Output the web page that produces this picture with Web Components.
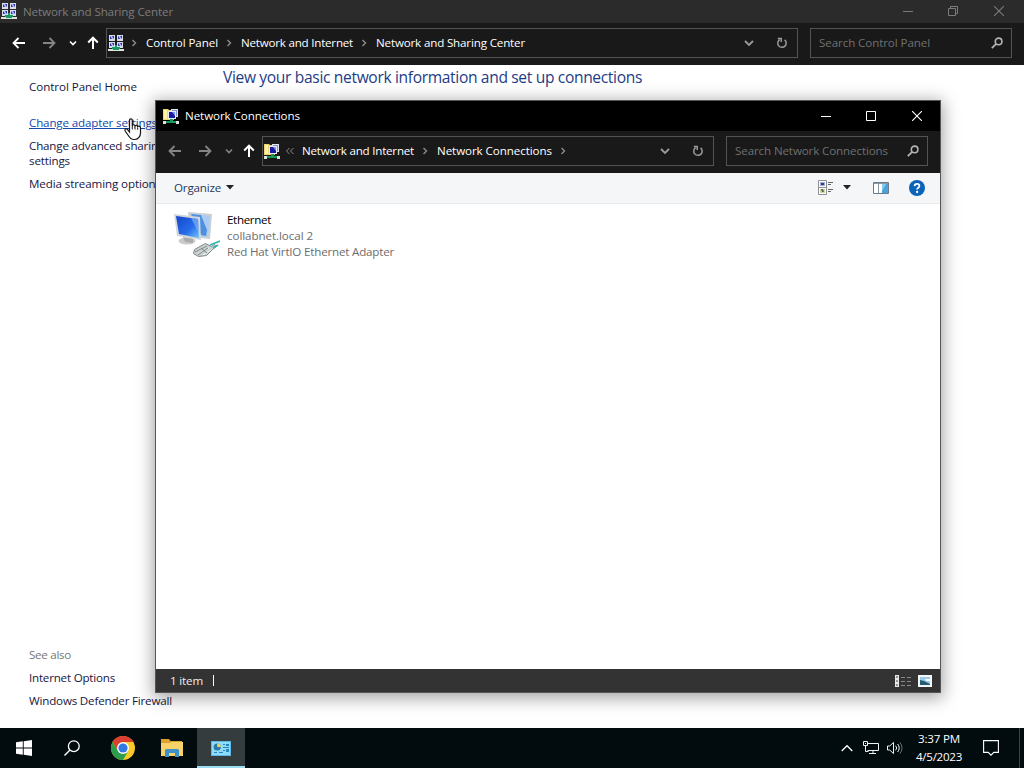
<!DOCTYPE html>
<html lang="en">
<head>
<meta charset="utf-8">
<title>Network Connections</title>
<style>
    html, body { margin: 0; height: 100%; overflow: hidden; }
    body { font-family: "Open Sans", "Noto Sans", sans-serif; font-size: 11.6px; color: #16163f; }
</style>
</head>
<body>
<desktop-screen></desktop-screen>

<script>
const monitor = (x, y) => `<path fill="#d9dde8" d="M${x} ${y}h6v6h-6z"/><path fill="#2a2fa8" d="M${x + 1} ${y + 1}h4v3h-4z"/><path fill="#b3bdf5" d="M${x + 1} ${y + 1}h2l2 3h-2z"/>`;

const ICONS = {
    sharing: [16, 16, `${monitor(1, 0)}${monitor(9, 0)}${monitor(1, 7)}${monitor(9, 7)}
        <path fill="#169a62" d="M7 10h2v2h3v2H4v-2h3z"/><path fill="#dbe3df" d="M0 14h16v2H0z"/><path fill="#169a62" d="M5 13h6v2H5z"/>`],
    connections: [16, 16, `<path fill="#e9d673" d="M0 1h5l1 1h5v10H0z"/><path fill="#fff2a5" d="M1 2h3v9H1z"/>
        <path fill="#dfe4ef" d="M8 1h7v8H8z"/><path fill="#8290ce" d="M9 2h5v6H9z"/>
        <path fill="#e7ebf4" d="M5 3h8v8H5z"/><path fill="#1719a2" d="M6 4h6v6H6z"/><path fill="#7d91ef" d="M9 4h3v4z"/>
        <path fill="#159b57" d="M7 11h3v2h3v2H3v-2h4z"/><path fill="#d8e3dc" d="M0 13h3v3H0zM13 13h3v3h-3z"/>`],
    back: [14, 14, `<path d="M13 7H1.5M6.5 2 1.5 7l5 5" fill="none" stroke="currentColor" stroke-width="1.8"/>`],
    forward: [14, 14, `<path d="M1 7h11.5M7.5 2l5 5-5 5" fill="none" stroke="currentColor" stroke-width="1.8"/>`],
    up: [14, 14, `<path d="M7 13V2M2.2 6.5 7 1.7l4.8 4.8" fill="none" stroke="currentColor" stroke-width="2"/>`],
    down: [8, 8, `<path d="M1 2.5l3 3 3-3" fill="none" stroke="currentColor" stroke-width="1.6"/>`],
    expand: [10, 8, `<path d="M1 2l4 4 4-4" fill="none" stroke="currentColor" stroke-width="1.8"/>`],
    crumb: [6, 8, `<path d="M1.5 1l3 3-3 3" fill="none" stroke="currentColor" stroke-width="1.4"/>`],
    crumbs: [8, 8, `<path d="M3.5 1l-3 3 3 3M7.5 1l-3 3 3 3" fill="none" stroke="currentColor"/>`],
    refresh: [12, 12, `<path d="M8.6 2.9A4.2 4.2 0 1 1 3.6 2.7M1.8 1.5h3.4v3.4" fill="none" stroke="currentColor" stroke-width="1.5"/>`],
    find: [12, 12, `<circle cx="7.6" cy="4.4" r="3.3" fill="none" stroke="currentColor" stroke-width="1.6"/><path d="M5.2 6.8.8 11.2" stroke="currentColor" stroke-width="1.8"/>`],
    minimize: [10, 10, `<path fill="currentColor" d="M0 5h10v1H0z"/>`],
    maximize: [10, 10, `<path d="M.5.5h9v9h-9z" fill="none" stroke="currentColor"/>`],
    restore: [10, 10, `<path d="M.5 2.5h7v7h-7zM2.5 2.5v-2h7v7h-2" fill="none" stroke="currentColor"/>`],
    close: [10, 10, `<path d="M0 0l10 10M10 0 0 10" stroke="currentColor" stroke-width="1.1"/>`],
    caret: [8, 5, `<path fill="#1e2328" d="M0 0h8L4 4.5z"/>`],
    views: [15, 16, `<path d="M.5.5h8v14h-8zM.5 7.5h8" fill="#fff" stroke="#8c8f94"/><path fill="#a3acd6" d="M2 2h5v4H2z"/><path fill="#343f8c" d="M3 3h3v2H3z"/>
        <path fill="#d3d6a4" d="M2 9h5v4H2z"/><path fill="#4d6d4d" d="M3 9h2l1 3H4z"/><path fill="#62666b" d="M10 2h5v1h-5zM10 4h3v1h-3zM10 9h5v1h-5zM10 11h3v1h-3z"/>`],
    pane: [16, 12, `<path fill="#fff" stroke="#6c7b88" d="M.5.5h15v11H.5z"/><path fill="#8997a3" d="M1 1h14v1H1zM5 1h1v10H5z"/><path fill="#4aa4dc" d="M9 2h6v9H9z"/><path fill="#8bcaf0" d="M9 2h4L9 9z"/>`],
    help: [16, 16, `<circle cx="8" cy="8" r="8" fill="#0b63b7"/><path d="M5.6 6.1C5.7 3.1 10.4 3.2 10.4 6c0 1.8-2.3 1.8-2.3 3.6" fill="none" stroke="#fff" stroke-width="1.8"/><circle cx="8.1" cy="12" r="1.15" fill="#fff"/>`],
    adapter: [46, 48, `<defs><linearGradient id="s" x1="0" y1="0" x2="1" y2="1"><stop offset="0" stop-color="#1345cc"/><stop offset=".6" stop-color="#276ce8"/><stop offset="1" stop-color="#72c4ff"/></linearGradient></defs>
        <path fill="#c9d0d4" d="M14 1l24 2-2 25-19-2z"/><path fill="#a9cdf2" d="M17 3l19 2-2 21-16-3z"/><path fill="#4f8fe2" d="M17 3l10 1L33 19l-1 6-5-1z"/>
        <ellipse cx="13" cy="30" rx="8.5" ry="3.5" fill="#c9cbc8"/><path fill="#a8acaa" d="M9 26l10 2v4l-8-1z"/>
        <path fill="#d0d6d9" d="M0 3l26 3 1 23L3 25z"/><path fill="url(#s)" d="M2 5l22 3 1 19L5 23z"/><path fill="#7eb6fa" opacity=".65" d="M17 7.1l7 1 .8 14z"/>
        <path fill="#cdd3d2" stroke="#7e8887" d="M20.5 38.5l11-6 6 3 3-2 2 2-4 3-6 6-8 1-5-3z"/><path fill="none" stroke="#eef1f1" d="M23 40l10-5M25 43l10-6M29 44l8-5"/>
        <path fill="none" stroke="#77827f" d="M21 41l12-6M24 44l10-7M27 37l6 5"/><path fill="none" stroke="#39b5b0" stroke-width="1.8" d="M36 34l10-4M39 37l5-3"/>`],
    details: [16, 12, `<path fill="#e7e7e7" d="M0 0h4v12H0z"/><path fill="#555" d="M1.2 1.2h1.5v1.5H1.2zM1.2 5.2h1.5v1.5H1.2zM1.2 9.2h1.5v1.5H1.2z"/><path fill="#888" d="M6 2h4v1H6zM12 2h4v1h-4zM6 6h4v1H6zM12 6h4v1h-4zM6 10h4v1H6zM12 10h4v1h-4z"/>`],
    large: [14, 12, `<path fill="#f3f7f9" d="M0 0h14v12H0z"/><path fill="#9bcae9" d="M2 2h10v8H2z"/><path fill="#245d72" d="M2 5l4 1 6 3v1H2z"/><path fill="#f6fbff" d="M7 4h5v2H8z"/>`],
    start: [16, 16, `<path fill="#fff" d="M0 2.3l6.8-1v6.3H0zM7.7 1.2 16 0v7.6H7.7zM0 8.4h6.8v6.4L0 13.8zM7.7 8.4H16V16l-8.3-1.2z"/>`],
    search: [16, 16, `<circle cx="9.8" cy="6.2" r="5.4" fill="none" stroke="#fff" stroke-width="1.3"/><path d="M6 10 .5 15.5" stroke="#fff" stroke-width="1.4"/>`],
    chrome: [24, 24, `<circle cx="12" cy="12" r="12" fill="#f8c927"/><path fill="#dc3e31" d="M1.6 6A12 12 0 0 1 22.4 6H12L6.8 15z"/><path fill="#2c9d4c" d="M1.6 6A12 12 0 0 0 12 24l5.2-9H6.8z"/>
        <circle cx="12" cy="12" r="6" fill="#fff"/><circle cx="12" cy="12" r="4.6" fill="#3478e5"/>`],
    explorer: [22, 18, `<path fill="#dda12e" d="M0 0h8l1.5 2H21v3H0z"/><path fill="#f8d36a" d="M0 4h9l1.5-1H22v14H0z"/><path fill="#3f91c9" d="M4 18v-7l1-1h12l1 1v7h-4v-4H8v4z"/>`],
    panel: [20, 15, `<path fill="#5db9e7" d="M0 0h20v15H0z"/><path fill="#8fdbfa" d="M1 1h18v13H1z"/><circle cx="6.2" cy="6" r="3.6" fill="#2879ac"/><path fill="#f1d563" d="M6.2 6V2.4A3.6 3.6 0 0 1 9.8 6z"/>
        <path fill="#2685bd" d="M12 3h2v1h-2zM15 3h3v2h-3zM12 6h6v1h-6zM12 9h2v1h-2zM15 8h3v3h-3zM3 11h3v1H3zM8 11h4v1H8z"/>`],
    chevron: [12, 8, `<path d="M.7 7 6 1.7 11.3 7" fill="none" stroke="#fff" stroke-width="1.3"/>`],
    network: [16, 14, `<path d="M4.5 2.5h11v7h-11M.5.5h4v4h-4zM2.5 4.5v6h3M10 9.5v3M6 12.5h7" fill="none" stroke="#eef2f2"/><path fill="#eef2f2" d="M2 2h1v1H2z"/>`],
    speaker: [16, 14, `<path d="M.5 5h2.2L6.5 1.4v11.2L2.7 9H.5z" fill="none" stroke="#eef2f2"/><path d="M8.6 4.7a3.3 3.3 0 0 1 0 4.6M10.6 3a5.8 5.8 0 0 1 0 8" fill="none" stroke="#eef2f2"/><path d="M12.8 1.4a8.2 8.2 0 0 1 0 11.2" fill="none" stroke="#67706f"/>`],
    action: [16, 16, `<path d="M.6.6h14.8v11.8h-4.6L8 15.2l-2.8-2.8H.6z" fill="none" stroke="#fff" stroke-width="1.1"/>`],
    pointer: [18, 23, `<path d="M5.5 14V2.4c0-2 2.8-2 2.8 0v5.2c.4-1.3 2.5-1.1 2.7.4.7-1.2 2.5-.8 2.7.6 1-1 2.8-.2 2.8 1.2V15c0 3.2-2.2 6.5-5.6 6.5H9.3c-2 0-3.2-1.2-4.3-3L1.2 13c-.9-1.6.9-3 2.2-1.7z" fill="#fff" stroke="#161616" stroke-width="1.2"/><path d="M8.3 7v4.5M11 8.5v3M13.7 9.5v2.2" stroke="#161616"/>`],
};

class BaseElement extends HTMLElement {
    connectedCallback() {
        if (this.shadowRoot) return;
        const template = document.createElement('template');
        template.innerHTML = `<style>${this.css}</style>${this.html}`;
        this.attachShadow({ mode: 'open' }).appendChild(template.content.cloneNode(true));
        this.ready();
    }

    get css() { return ':host { display: block; }'; }
    get html() { return '<slot></slot>'; }
    ready() {}
}

class UiIcon extends BaseElement {
    get css() { return ':host { display: block; flex: none; } svg { display: block; }'; }
    get html() {
        const [w, h, body] = ICONS[this.getAttribute('name')];
        return `<svg width="${w}" height="${h}" viewBox="0 0 ${w} ${h}">${body}</svg>`;
    }
}

// Single line of text, tracked so that it fills the width given in "fit"
class UiText extends BaseElement {
    get css() {
        return `
            :host { display: block; flex: none; line-height: 16px; white-space: nowrap; }
            span { display: inline-block; vertical-align: top; text-decoration: inherit; }
        `;
    }
    get html() { return '<span><slot></slot></span>'; }
    ready() {
        const fit = Number(this.getAttribute('fit'));
        const span = this.shadowRoot.querySelector('span');
        const spacing = (fit - span.getBoundingClientRect().width) / this.textContent.length;
        span.style.letterSpacing = `${spacing.toFixed(3)}px`;
    }
}

class TitleBar extends BaseElement {
    get css() {
        return `
            :host { display: flex; align-items: center; box-sizing: border-box; }
            ui-text { flex: 1; margin-left: 6px; padding-top: var(--caption-drop, 0); }
            div { display: flex; align-self: stretch; }
            .button { width: 46px; align-items: center; justify-content: center; }
            .min { margin-left: 2px; }
        `;
    }
    get html() {
        return `
            <ui-icon name="${this.getAttribute('icon')}"></ui-icon>
            <ui-text fit="${this.getAttribute('fit')}">${this.getAttribute('caption')}</ui-text>
            <div>
                <div class="button"><ui-icon class="min" name="minimize"></ui-icon></div>
                <div class="button"><ui-icon name="${this.getAttribute('middle')}"></ui-icon></div>
                <div class="button"><ui-icon name="close"></ui-icon></div>
            </div>
        `;
    }
}

class NavBar extends BaseElement {
    get css() {
        return `
            :host { display: flex; height: 42px; box-sizing: border-box; padding: 5px 12px 7px 0; background: #191919; color: #fff; }
            .buttons { display: grid; grid-template-columns: 26px 34px 13px 28px; width: 100px; padding-left: 6px; align-items: center; justify-items: center; }
            .dim { color: #858585; }
            .field { display: flex; box-sizing: border-box; height: 30px; border: 1px solid #535353; align-items: center; }
            .address { flex: 1; padding-left: 1px; }
            .lead { display: flex; width: 22px; justify-content: center; padding-right: 3px; box-sizing: border-box; color: #8b8b8b; }
            .tools { display: flex; margin-left: auto; color: #9b9b9b; align-items: center; gap: 22px; padding-right: 9px; }
            .search { width: 202px; margin-left: 12px; padding: 0 8px; color: #707070; justify-content: space-between; }
            .search ui-icon { color: #b4b4b4; }
        `;
    }
    get html() {
        const back = this.hasAttribute('no-back') ? 'dim' : '';
        return `
            <div class="buttons">
                <ui-icon class="${back}" name="back"></ui-icon>
                <ui-icon class="dim" name="forward"></ui-icon>
                <ui-icon class="${back}" name="down"></ui-icon>
                <ui-icon name="up"></ui-icon>
            </div>
            <div class="field address">
                <ui-icon name="${this.getAttribute('icon')}"></ui-icon>
                <div class="lead"><ui-icon name="${this.getAttribute('lead')}"></ui-icon></div>
                <slot></slot>
                <div class="tools"><ui-icon name="expand"></ui-icon><ui-icon name="refresh"></ui-icon></div>
            </div>
            <div class="field search">
                <ui-text fit="${this.getAttribute('fit')}">${this.getAttribute('placeholder')}</ui-text>
                <ui-icon name="find"></ui-icon>
            </div>
        `;
    }
}

class NavCrumb extends BaseElement {
    get css() {
        return `
            :host { display: flex; align-items: center; }
            div { display: flex; width: 23px; box-sizing: border-box; padding-right: 2px; justify-content: center; color: #8b8b8b; }
        `;
    }
    get html() {
        const arrow = this.hasAttribute('last') ? '' : '<div><ui-icon name="crumb"></ui-icon></div>';
        return `<slot></slot>${arrow}`;
    }
}

class SharingCenter extends BaseElement {
    get css() {
        return `
            :host { display: flex; flex-direction: column; background: #fff; }
            title-bar { height: 23px; padding: 0 2px 1px 1px; background: #2b2b2b; color: #7b7b7b; --caption-drop: 2px; }
            main { display: flex; flex: 1; }
            aside { display: flex; flex-direction: column; width: 223px; box-sizing: border-box; padding: 14px 0 19px 29px; }
            .link { color: #1549ac; text-decoration: underline; margin: 20px 0 7px; }
            .tight { line-height: 15px; }
            .media { margin-top: 8px; }
            .also { display: grid; gap: 7px; margin-top: auto; }
            .muted { color: #777; }
            h1 { margin: 2px 0 0; font-size: 15.6px; font-weight: normal; color: #1e3c86; }
            h1 ui-text { line-height: 20px; }
        `;
    }
    get html() {
        return `
            <title-bar icon="sharing" middle="restore" caption="Network and Sharing Center" fit="150"></title-bar>
            <nav-bar icon="sharing" lead="crumb" placeholder="Search Control Panel" fit="111">
                <nav-crumb><ui-text fit="72">Control Panel</ui-text></nav-crumb>
                <nav-crumb><ui-text fit="112">Network and Internet</ui-text></nav-crumb>
                <nav-crumb last><ui-text fit="149">Network and Sharing Center</ui-text></nav-crumb>
            </nav-bar>
            <main>
                <aside>
                    <ui-text fit="108">Control Panel Home</ui-text>
                    <ui-text class="link" fit="128">Change adapter settings</ui-text>
                    <ui-text class="tight" fit="135">Change advanced sharing</ui-text>
                    <ui-text class="tight" fit="41">settings</ui-text>
                    <ui-text class="media" fit="132">Media streaming options</ui-text>
                    <div class="also">
                        <ui-text class="muted" fit="42">See also</ui-text>
                        <ui-text fit="86">Internet Options</ui-text>
                        <ui-text fit="143">Windows Defender Firewall</ui-text>
                    </div>
                </aside>
                <h1><ui-text fit="419">View your basic network information and set up connections</ui-text></h1>
            </main>
        `;
    }
}

class ConnectionsWindow extends BaseElement {
    get css() {
        return `
            :host { display: flex; flex-direction: column; box-sizing: border-box; border: 1px solid #555; background: #fff; box-shadow: 0 3px 16px 2px rgba(0, 0, 0, .36); }
            title-bar { height: 30px; padding-left: 7px; background: #000; color: #fff; }
            .toolbar { display: flex; align-items: center; height: 31px; box-sizing: border-box; padding: 0 15px 1px 18px; background: #f5f6f7; border-bottom: 1px solid #e9eaeb; color: #1e395b; }
            .organize { display: flex; align-items: center; gap: 5px; flex: 1; }
            .views { display: flex; align-items: center; gap: 10px; margin-right: 22px; }
            .pane { margin-right: 20px; }
            .items { flex: 1; padding: 7px 18px; }
            .item { display: flex; gap: 7px; color: #6d6d6d; }
            .item div { padding-top: 1px; }
            .name { color: #000; }
            footer { display: flex; align-items: center; height: 23px; padding: 0 8px 0 14px; background: #333; color: #eee; }
            i { width: 1px; height: 11px; margin: 0 auto 0 10px; background: #fff; }
            .large { margin-left: 7px; }
        `;
    }
    get html() {
        return `
            <title-bar icon="connections" middle="maximize" caption="Network Connections" fit="115"></title-bar>
            <nav-bar no-back icon="connections" lead="crumbs" placeholder="Search Network Connections" fit="153">
                <nav-crumb><ui-text fit="112">Network and Internet</ui-text></nav-crumb>
                <nav-crumb><ui-text fit="115">Network Connections</ui-text></nav-crumb>
            </nav-bar>
            <div class="toolbar">
                <div class="organize"><ui-text fit="47">Organize</ui-text><ui-icon name="caret"></ui-icon></div>
                <div class="views"><ui-icon name="views"></ui-icon><ui-icon name="caret"></ui-icon></div>
                <ui-icon class="pane" name="pane"></ui-icon>
                <ui-icon name="help"></ui-icon>
            </div>
            <div class="items">
                <div class="item">
                    <ui-icon name="adapter"></ui-icon>
                    <div>
                        <ui-text class="name" fit="44">Ethernet</ui-text>
                        <ui-text fit="86">collabnet.local 2</ui-text>
                        <ui-text fit="167">Red Hat VirtIO Ethernet Adapter</ui-text>
                    </div>
                </div>
            </div>
            <footer>
                <ui-text fit="33">1 item</ui-text><i></i>
                <ui-icon name="details"></ui-icon><ui-icon class="large" name="large"></ui-icon>
            </footer>
        `;
    }
}

class TaskBar extends BaseElement {
    get css() {
        return `
            :host { display: flex; height: 40px; background: #020b0e; color: #fff; }
            .button { display: flex; width: 48px; box-sizing: border-box; align-items: center; justify-content: center; }
            .apps { display: flex; gap: 1px; margin-left: 3px; flex: 1; }
            .active { padding-top: 2px; background: #343c3e; border-bottom: 2px solid #9bdcf2; }
            .tray { display: flex; align-items: center; gap: 8px; }
            .tray ui-icon:first-child { margin-right: 2px; }
            .clock { display: flex; flex-direction: column; width: 50px; align-items: center; margin: 2px 0 0 11px; }
            .clock ui-text { line-height: 18px; }
            .action { width: 55px; padding-right: 1px; }
            .peek { width: 4px; border-left: 1px solid #3c4446; }
        `;
    }
    get html() {
        return `
            <div class="button"><ui-icon name="start"></ui-icon></div>
            <div class="button"><ui-icon name="search"></ui-icon></div>
            <div class="apps">
                <div class="button"><ui-icon name="chrome"></ui-icon></div>
                <div class="button"><ui-icon name="explorer"></ui-icon></div>
                <div class="button active"><ui-icon name="panel"></ui-icon></div>
            </div>
            <div class="tray"><ui-icon name="chevron"></ui-icon><ui-icon name="network"></ui-icon><ui-icon name="speaker"></ui-icon></div>
            <div class="clock"><ui-text fit="42">3:37 PM</ui-text><ui-text fit="46">4/5/2023</ui-text></div>
            <div class="button action"><ui-icon name="action"></ui-icon></div>
            <div class="peek"></div>
        `;
    }
}

class DesktopScreen extends BaseElement {
    get css() {
        return `
            :host { display: flex; flex-direction: column; position: relative; width: 1024px; height: 768px; overflow: hidden; }
            sharing-center { flex: 1; }
            connections-window { position: absolute; left: 155px; top: 100px; width: 786px; height: 593px; }
            .pointer { position: absolute; left: 124px; top: 118px; }
        `;
    }
    get html() {
        return `
            <sharing-center></sharing-center>
            <task-bar></task-bar>
            <connections-window></connections-window>
            <ui-icon class="pointer" name="pointer"></ui-icon>
        `;
    }
}

customElements.define('ui-icon', UiIcon);
customElements.define('ui-text', UiText);
customElements.define('title-bar', TitleBar);
customElements.define('nav-crumb', NavCrumb);
customElements.define('nav-bar', NavBar);
customElements.define('sharing-center', SharingCenter);
customElements.define('connections-window', ConnectionsWindow);
customElements.define('task-bar', TaskBar);
customElements.define('desktop-screen', DesktopScreen);
</script>
</body>
</html>
